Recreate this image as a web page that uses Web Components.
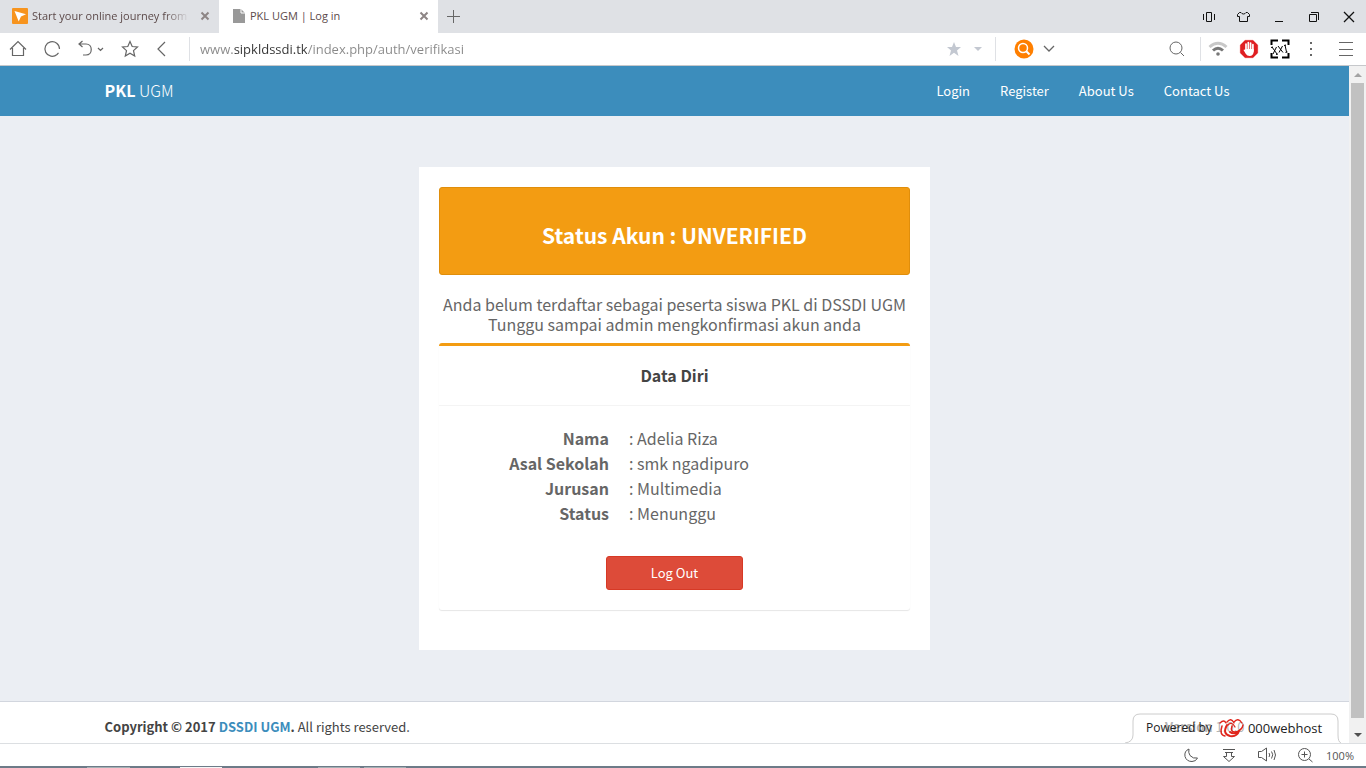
<!DOCTYPE html>
<html lang="id">
<head>
<meta charset="utf-8">
<title>PKL UGM | Log in</title>
<style>
html, body { margin: 0; height: 100%; }
body { --ui: "Open Sans", "Noto Sans", sans-serif; --site: "Noto Sans CJK SC", "Noto Sans", sans-serif; overflow: hidden; background: #fff; font-family: var(--ui); }
</style>
</head>
<body>
<browser-window>
  <tab-strip slot="tabs"></tab-strip>
  <address-bar slot="toolbar"></address-bar>
  <site-page slot="page">
    <site-header slot="header"></site-header>
    <status-card status="UNVERIFIED">
      <data-box heading="Data Diri">
        <data-row label="Nama">Adelia Riza</data-row>
        <data-row label="Asal Sekolah">smk ngadipuro</data-row>
        <data-row label="Jurusan">Multimedia</data-row>
        <data-row label="Status">Menunggu</data-row>
      </data-box>
    </status-card>
    <site-footer slot="footer"></site-footer>
  </site-page>
  <page-scrollbar slot="scroll"></page-scrollbar>
  <status-bar slot="status"></status-bar>
</browser-window>

<script>
const reset = `<style>
*, :host { box-sizing: border-box; }
button { font: inherit; color: inherit; background: none; border: 0; padding: 0; margin: 0; display: flex; align-items: center; justify-content: center; }
svg { display: block; flex: none; }
svg:not([fill]) { fill: none; }
svg:not([stroke]) { stroke: currentColor; }
a { color: inherit; text-decoration: none; }
</style>`;

function define(name, html) {
  customElements.define(name, class extends HTMLElement {
    constructor() {
      super();
      const markup = typeof html === 'function' ? html(this) : html;
      this.attachShadow({ mode: 'open' }).innerHTML = reset + markup;
    }
  });
}

define('browser-window', `<style>
:host { display: flex; flex-direction: column; height: 100vh; }
.view { flex: 1; min-height: 0; display: flex; overflow: hidden; }
::slotted([slot=page]) { flex: 1; min-width: 0; }
.taskbar { height: 2px; flex: none; border-top: 1px solid #6d7b88; background: linear-gradient(90deg, #6d7b88 87px, #a4b0b4 87px 130px, #6d7b88 130px 180px, #f5f7f7 180px 222px, #6d7b88 222px 318px, #a4b0b4 318px 360px, #6d7b88 360px 364px, #a4b0b4 364px 406px, #6d7b88 406px); }
</style>
<slot name="tabs"></slot><slot name="toolbar"></slot>
<div class="view"><slot name="page"></slot><slot name="scroll"></slot></div>
<slot name="status"></slot><div class="taskbar"></div>`);

define('browser-tab', el => `<style>
:host { display: flex; align-items: center; width: 219px; height: 33px; padding: 0 6px 1px 12px; color: #5c4a4a; font-size: 12px; }
:host([active]) { background: #fff; padding-left: 13px; }
.name { flex: 1; min-width: 0; justify-content: flex-start; gap: 4px; overflow: hidden; }
.label { flex: 1; text-align: left; white-space: nowrap; overflow: hidden; font-size: 11px; line-height: 16px; }
:host(:not([active])) .label { -webkit-mask-image: linear-gradient(90deg, #000 85%, transparent); mask-image: linear-gradient(90deg, #000 85%, transparent); }
.close { width: 16px; height: 16px; margin-left: 8px; color: #8d8585; flex: none; }
</style>
<button class="name" role="tab"><slot name="icon"></slot><span class="label"><slot></slot></span></button>
<button class="close" aria-label="Close tab"><svg width="10" height="10" stroke-width="2"><path d="M1.500 1.500l7 7m0-7l-7 7"/></svg></button>`);

define('tab-strip', `<style>
:host { display: flex; align-items: center; height: 33px; flex: none; background: #dfe1e5; color: #111; }
.add { width: 32px; height: 32px; color: #666; }
.controls { margin-left: auto; display: flex; }
.controls button { width: 35px; height: 33px; }
</style>
<browser-tab><svg slot="icon" width="16" height="16" stroke="none"><rect width="16" height="16" rx="1" fill="#f7941e"/><path d="M2.500 3l11.500 3.200-5 2.300-2.300 5z" fill="#fff"/></svg>Start your online journey from</browser-tab>
<browser-tab active><svg slot="icon" width="14" height="16" viewBox="0 0 14 16" stroke="none"><path d="M1 1h8l4 4v10H1z" fill="#999"/><path d="M9 1v4h4" fill="none" stroke="#fff"/></svg>PKL UGM | Log in</browser-tab>
<button class="add" aria-label="New tab"><svg width="14" height="14"><path d="M6.500 0v13M0 6.500h13"/></svg></button>
<div class="controls">
<button aria-label="Split view"><svg width="14" height="12"><path d="M4.500 1.500h5v9h-5zM1.500 3v6M12.500 3v6" /></svg></button>
<button aria-label="Themes"><svg width="13" height="12"><path d="M4 1.500H2.500l-2 2v2h2v5h8v-5h2v-2l-2-2H9c-1 2-4 2-5 0z"/></svg></button>
<button aria-label="Minimize"><svg width="10" height="10"><path d="M1 9.500h8"/></svg></button>
<button aria-label="Restore"><svg width="12" height="12"><path d="M1.500 3.500h7v7h-7zM3 1.500h7.500V9"/></svg></button>
<button aria-label="Close"><svg width="12" height="12"><path d="M1 1l10 10m0-10L1 11" stroke-width="1.300"/></svg></button>
</div>`);

define('address-bar', `<style>
:host { display: flex; align-items: center; height: 33px; flex: none; background: #fff; border-bottom: 1px solid #c6c8cb; color: #666; padding: 0 9px; }
button { height: 32px; flex: none; }
.sep { width: 1px; height: 24px; background: #dfe1e5; flex: none; }
.left { display: flex; gap: 16px; padding-right: 16px; }
.left button { width: 18px; }
.left .undo { width: 28px; }
input { flex: 1; min-width: 0; height: 24px; border: 0; outline: 0; padding: 0 10px; margin: 0; font: 13px/20px var(--ui); -webkit-text-fill-color: transparent; background: linear-gradient(90deg, #888 43px, #333 43px 117px, #888 117px); -webkit-background-clip: text; background-clip: text; }
.fav { width: 20px; color: #c3c8d1; }
.drop { width: 12px; margin: 0 11px 0 8px; color: #c3c8d1; }
.engine { width: 20px; margin: 0 8px 0 18px; }
.find { width: 113px; height: 24px; background: none; -webkit-text-fill-color: currentColor; flex: none; }
.right-sep { margin: 0 1px 0 15px; }
.right { display: flex; }
.right button { width: 31px; }
.right button:last-child { width: 22px; margin-left: 9px; }
</style>
<div class="left">
<button aria-label="Home"><svg width="18" height="18"><path d="M1 9.500L9 1.500l8 8M3.500 8v7.500h11V8" stroke-width="1.200"/></svg></button>
<button aria-label="Reload"><svg width="18" height="18"><path d="M14 14.500A7.300 7.300 0 1 1 16.500 9M14 14.500l1.500-1.700" stroke-width="1.200"/></svg></button>
<button class="undo" aria-label="Undo close"><svg width="28" height="18"><path d="M5.500 1L2 4l3.500 3M2 4h7c7 0 7 11 0 11H6M21 8l2.500 2.500L26 8" stroke-width="1.200"/></svg></button>
<button aria-label="Favorite"><svg width="18" height="18"><path d="M9 1.500l2.200 5 5.300.5-4 3.600 1.200 5.400L9 13.200 4.300 16l1.200-5.400-4-3.600 5.300-.5z" stroke-width="1.200"/></svg></button>
<button aria-label="Back"><svg width="18" height="18"><path d="M10 2L3 9l7 7" stroke-width="1.200"/></svg></button>
</div>
<span class="sep"></span>
<input aria-label="Address" value="www.sipkldssdi.tk/index.php/auth/verifikasi">
<button class="fav" aria-label="Bookmark"><svg width="16" height="16"><path d="M8 1l2 5h5l-4 3.400L12.500 15 8 11.700 3.500 15 5 9.400 1 6h5z" fill="currentColor" stroke="none"/></svg></button>
<button class="drop" aria-label="Bookmark options"><svg width="8" height="5"><path d="M0 0h8L4 4z" fill="currentColor" stroke="none"/></svg></button>
<span class="sep"></span>
<button class="engine" aria-label="Search engine"><svg width="20" height="20"><circle cx="10" cy="10" r="9.500" fill="#ff7f00" stroke="none"/><circle cx="9" cy="9" r="4.500" stroke="#fff" stroke-width="1.500"/><path d="M12.300 12.300L15.500 15.500" stroke="#fff" stroke-width="2"/></svg></button>
<button aria-label="Choose engine"><svg width="14" height="10"><path d="M2 2l5 5 5-5" stroke-width="1.300"/></svg></button>
<input class="find" type="text" aria-label="Search">
<button aria-label="Search"><svg width="16" height="16"><circle cx="7" cy="7" r="6"/><path d="M11.500 11.500l3.500 3.500"/></svg></button>
<span class="sep right-sep"></span>
<div class="right">
<button aria-label="Wi-Fi"><svg width="20" height="16"><path d="M1.500 6q8.500-7.500 17 0" stroke="#c8c8c8" stroke-width="3"/><path d="M5 9.500q5-4.500 10 0" stroke="#777" stroke-width="3"/><circle cx="10" cy="13" r="1.800" fill="#777" stroke="none"/></svg></button>
<button aria-label="Ad blocker"><svg width="20" height="20"><path d="M6 1h8l5 5v8l-5 5H6l-5-5V6z" fill="#df1f22" stroke="#f8b2b2" stroke-width=".5"/><path d="M7 12V5m2.300 6V3.500m2.300 7.500V4m2.300 8V5.500" stroke="#fff" stroke-width="1.700" stroke-linecap="round"/><path d="M6.200 10h8.500v3q-.7 4-4 4-2.700 0-4-2.200L4.500 11q.8-1 2 .6z" fill="#fff" stroke="none"/></svg></button>
<button aria-label="XXI"><svg width="20" height="20" stroke="#000"><path d="M8 1.500H1.500V6M12 1.500h6.500V6M1.500 14v4.500H8M12 18.500h6.500V14" stroke-width="2"/><path d="M2 8l5 7M6.500 8L3 15M8 7l5 6.500M12.500 7L9 13.500M15 6l1.500 7M14 6.500l2-.5M15.500 13.500l2-.5M1 8.500l2-.5M6 15.500l2-.5" stroke-width="1"/></svg></button>
<button aria-label="More tools"><svg width="4" height="16" fill="#666" stroke="none"><path d="M1 1h2v2H1zM1 7h2v2H1zM1 13h2v2H1z"/></svg></button>
<button aria-label="Menu"><svg width="14" height="16"><path d="M0 1.500h14M0 8.500h14M0 14.500h14"/></svg></button>
</div>`);

define('site-page', `<style>
:host { display: flex; flex-direction: column; background: #ebeef3; font-family: var(--site); position: relative; }
main { flex: 1 0 auto; display: flex; align-items: center; justify-content: center; }
</style>
<slot name="header"></slot><main><slot></slot></main><slot name="footer"></slot>`);

define('site-header', `<style>
:host { display: block; background: #3c8dbc; color: #fff; flex: none; }
.inner { max-width: 1170px; margin: 0 auto; padding: 0 15px; display: flex; justify-content: space-between; align-items: center; height: 50px; }
.brand { font-size: 16px; font-weight: 300; line-height: 20px; padding-bottom: 2px; }
.brand b { font-weight: 700; }
nav { display: flex; }
nav a { padding: 15px; font-size: 13px; line-height: 20px; }
</style>
<div class="inner"><a class="brand" href="#"><b>PKL</b> UGM</a>
<nav><a href="#">Login</a><a href="#">Register</a><a href="#">About Us</a><a href="#">Contact Us</a></nav></div>`);

define('status-card', el => `<style>
:host { display: block; width: 511px; max-width: 100%; padding: 20px; background: #fff; color: #666; }
.callout { display: flex; align-items: center; justify-content: center; height: 88px; padding-top: 8px; border: 1px solid #e08e0b; border-radius: 3px; background: #f39c12; color: #fff; }
h1 { margin: 0; font-size: 21px; line-height: 26px; font-weight: 700; }
p { margin: 19px 0 9px; font-size: 16px; line-height: 20px; font-weight: 400; text-align: center; white-space: nowrap; }
</style>
<div class="callout"><h1>Status Akun : ${el.getAttribute('status')}</h1></div>
<p>Anda belum terdaftar sebagai peserta siswa PKL di DSSDI UGM<br>Tunggu sampai admin mengkonfirmasi akun anda</p>
<slot></slot>`);

define('data-box', el => `<style>
:host { display: block; border-top: 3px solid #f39c12; border-radius: 3px; box-shadow: 0 1px 1px rgba(0,0,0,.1); margin-bottom: 20px; font-size: 16px; }
h2 { margin: 0; height: 60px; border-bottom: 1px solid #f4f4f4; color: #444; font-size: 16px; line-height: 58px; text-align: center; }
.body { padding: 20px 10px; }
dl { margin: 0 0 30px; }
button { width: 137px; height: 34px; margin: 0 auto; padding-bottom: 1px; border: 1px solid #d73925; border-radius: 3px; background: #dd4b39; color: #fff; font-size: 13px; }
</style>
<h2>${el.getAttribute('heading')}</h2>
<div class="body"><dl><slot></slot></dl><button type="button">Log Out</button></div>`);

define('data-row', el => `<style>
:host { display: grid; grid-template-columns: 160px 1fr; column-gap: 20px; line-height: 25px; }
dt { font-weight: 700; text-align: right; }
dd { margin: 0; }
</style>
<dt>${el.getAttribute('label')}</dt><dd>: <slot></slot></dd>`);

define('site-footer', `<style>
:host { display: block; flex: none; background: #fff; border-top: 1px solid #d2d6de; color: #444; font-size: 13px; line-height: 20px; }
.inner { max-width: 1170px; margin: 0 auto; padding: 15px 15px 6px; display: flex; justify-content: space-between; }
b a { color: #3c8dbc; }
</style>
<div class="inner"><span><b>Copyright © 2017 <a href="#">DSSDI UGM</a>.</b> All rights reserved.</span><span><b>Version</b> 1.0.0</span></div>
<host-badge></host-badge>`);

define('host-badge', `<style>
:host { position: absolute; right: 8px; bottom: 0; width: 216px; height: 30px; font-family: var(--ui); color: #222; line-height: 18px; }
.shape { position: absolute; inset: 0; }
a { position: relative; display: flex; align-items: center; height: 30px; padding-left: 21px; font-size: 12px; }
.logo { margin: 0 3px 0 7px; }
.host { font-size: 13px; }
</style>
<svg class="shape" width="216" height="30"><path d="M0 30q8-1 8-8V8q0-7 7-7h191q7 0 7 7v14q0 7 3 8" fill="#fff" fill-opacity=".6" stroke="#ccc"/></svg>
<a href="#"><span>Powered by</span><svg class="logo" width="26" height="22" stroke="#e0251b" stroke-linecap="round"><path d="M3 9q-3 9 3 10" stroke-width="1.500"/><path d="M8 8q-5 9 3 11 7 1 9-5-5 4-9 1" stroke-width="2"/><path d="M13 9q-2 6 3 6 7-1 8-7" stroke-width="1.500"/><path d="M1 6q4-4 6 0M8 5q4-5 7 1M15 5q4-5 8 1M9 8q4-4 7 2" stroke-width="1.300"/></svg><span class="host">000webhost</span></a>`);

define('page-scrollbar', `<style>
:host { display: flex; flex-direction: column; align-items: center; width: 17px; flex: none; background: #f1f1f1; color: #505050; }
button { width: 17px; height: 17px; flex: none; }
.up { color: #a3a3a3; }
.thumb { width: 13px; flex: 1; background: #c1c1c1; }
.gap { height: 8px; }
</style>
<button class="up" aria-label="Scroll up"><svg width="8" height="4" fill="currentColor" stroke="none"><path d="M0 4l4-4 4 4z"/></svg></button>
<div class="thumb"></div><div class="gap"></div>
<button aria-label="Scroll down"><svg width="8" height="4" fill="currentColor" stroke="none"><path d="M0 0h8L4 4z"/></svg></button>`);

define('status-bar', `<style>
:host { display: flex; align-items: center; justify-content: flex-end; height: 23px; flex: none; border-top: 1px solid #dcdfe2; background: #fff; color: #555; padding-right: 12px; font-size: 11px; }
button { height: 22px; margin-right: 18px; width: 20px; }
button:last-of-type { margin: 0 0 0 -7px; width: 28px; }
</style>
<button aria-label="Night mode"><svg width="16" height="16"><path d="M6 2Q1 4 2 9.500q1.500 5 7 5 4 0 5.500-3.500Q10 12 7 8.500 5 5.500 6 2z"/></svg></button>
<button aria-label="Downloads"><svg width="14" height="16"><path d="M1 2.500h12M3 5.500h8M4.500 5.500v4H1.500l5.500 5 5.500-5h-3v-4"/></svg></button>
<button aria-label="Sound"><svg width="20" height="16"><path d="M1.500 4.500h3l5-3.500v13l-5-3.500h-3zM12 6q1.500 2 0 4M14.500 4.500q2.500 3 0 7M17 3q3 5 0 10"/></svg></button>
<button aria-label="Zoom"><svg width="16" height="16"><circle cx="7.500" cy="7.500" r="6"/><path d="M4.500 7.500h6M7.500 4.500v6M12 12l3.500 3"/></svg></button>
<button>100%</button>`);
</script>
</body>
</html>
